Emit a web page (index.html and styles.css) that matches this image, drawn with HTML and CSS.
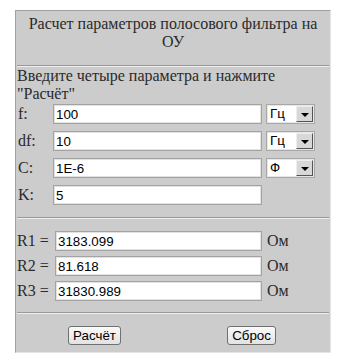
FILE: index.html
```html
<!DOCTYPE html>
<html>
    <head>
        <meta charset="UTF-8">
        <title>Расчет полосового фильтра на ОУ</title>
        <link rel="stylesheet" href="styles.css">
    </head>
    <body>
        <div class="panel">
            <div class="title">Расчет параметров полосового фильтра на ОУ</div>
            <hr class="rule">
            <div class="intro">Введите четыре параметра и нажмите "Расчёт"</div>
            <div class="params">
                <span class="lbl">f:</span>
                <input class="field" type="text" value="100">
                <div class="pick"><span class="pickText">Гц</span><span class="pickBtn"></span></div>

                <span class="lbl">df:</span>
                <input class="field" type="text" value="10">
                <div class="pick"><span class="pickText">Гц</span><span class="pickBtn"></span></div>

                <span class="lbl">C:</span>
                <input class="field" type="text" value="1E-6">
                <div class="pick"><span class="pickText">Ф</span><span class="pickBtn"></span></div>

                <span class="lbl">K:</span>
                <input class="field" type="text" value="5">
            </div>
            <hr class="rule">
            <div class="results">
                <span class="lbl">R1 =</span>
                <input class="field" type="text" value="3183.099">
                <span class="unit">Ом</span>

                <span class="lbl">R2 =</span>
                <input class="field" type="text" value="81.618">
                <span class="unit">Ом</span>

                <span class="lbl">R3 =</span>
                <input class="field" type="text" value="31830.989">
                <span class="unit">Ом</span>
            </div>
            <hr class="rule">
            <div class="actions">
                <button class="btn" type="button">Расчёт</button>
                <button class="btn" type="reset">Сброс</button>
            </div>
        </div>
    </body>
</html>
```

FILE: styles.css
```css
html, body {
    background: #fff;
    margin: 0; padding: 0; }

.panel {
    box-sizing: border-box;
    width: 316px; height: 343px;
    margin: 10px 0 0 15px;
    background: #ccc;
    color: #2a2a2a;
    font-family: "Liberation Serif", "Times New Roman", serif;
    font-size: 16px;
    border: 1px solid;
    border-color: #a0a0a0 #e4e4e4 #e4e4e4 #a0a0a0; }

.title {
    text-align: center;
    padding: 4px 8px 0;
    height: 50px;
    box-sizing: border-box; }

.rule {
    height: 0;
    margin: 4px 1px 0;
    border: 0;
    border-top: 1px solid #999;
    border-bottom: 1px solid #eee; }

.intro {
    padding: 0 1px;
    line-height: 18px;
    height: 37px; }

.params, .results {
    display: grid;
    align-items: center; }
.params {
    grid-template-columns: 31px 209px 49px;
    column-gap: 4px;
    row-gap: 7px;
    padding-left: 2px;
    margin-bottom: 12px; }
.results {
    grid-template-columns: 33px 207px auto;
    column-gap: 5px;
    row-gap: 5px;
    padding-left: 1px;
    margin-top: 12px;
    margin-bottom: 11px; }
.lbl { white-space: nowrap; }

.field {
    box-sizing: border-box;
    height: 20px;
    margin: 0;
    padding: 0 2px;
    border: 1px solid #a3a3a3;
    box-shadow: inset 0 0 0 1px #e2e2e2;
    background: #fff;
    color: #000;
    font-family: "Liberation Sans", Arial, sans-serif;
    font-size: 13.33px;
    outline: none; }

.pick {
    box-sizing: border-box;
    height: 20px;
    display: flex;
    align-items: stretch;
    background: #fff;
    border: 1px solid #a8a8a8;
    box-shadow: inset 0 0 0 1px #e6e6e6; }
.pickText {
    flex-grow: 1;
    padding-left: 3px;
    line-height: 17px;
    color: #000;
    font-family: "Liberation Sans", Arial, sans-serif;
    font-size: 13.33px; }
.pickBtn {
    position: relative;
    box-sizing: border-box;
    width: 17px;
    margin: 1px 1px 1px 0;
    background: #d8d8d8;
    border: 1px solid;
    border-color: #eee #555 #555 #eee; }
.pickBtn::after {
    content: "";
    position: absolute;
    left: 4px; top: 6px;
    border-left: 4px solid transparent;
    border-right: 4px solid transparent;
    border-top: 4px solid #000; }

.unit { color: #2a2a2a; }

.actions {
    display: grid;
    grid-template-columns: 1fr 1fr;
    justify-items: center;
    padding-top: 12px; }
.btn {
    height: 19px;
    padding: 0 4px;
    font-family: "Liberation Sans", Arial, sans-serif;
    font-size: 13.33px;
    color: #000;
    background: linear-gradient(#fafafa, #e2e2e2);
    border: 1px solid #707070;
    border-radius: 3px; }
```
